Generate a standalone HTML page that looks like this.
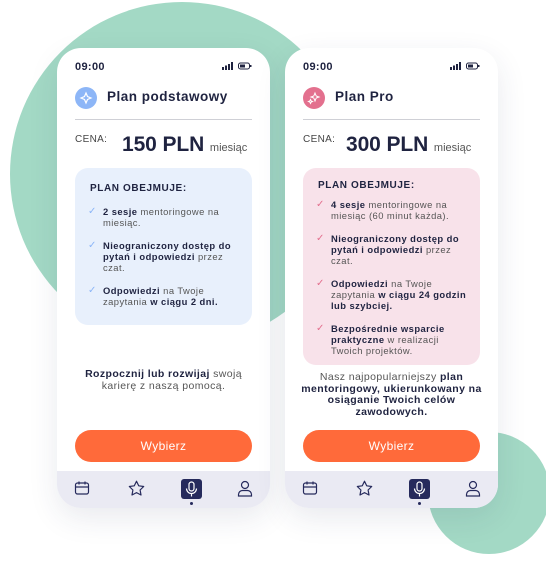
<!DOCTYPE html>
<html><head><meta charset="utf-8"><style>
*{margin:0;padding:0;box-sizing:border-box}
body{width:546px;height:569px;background:#fff;position:relative;overflow:hidden;font-family:"Liberation Sans",sans-serif;color:#1f2340;letter-spacing:.35px}
.c1{position:absolute;left:10px;top:2px;width:344px;height:344px;border-radius:50%;background:#a3d9c5}
.c2{position:absolute;left:428px;top:432px;width:122px;height:122px;border-radius:50%;background:#a3d9c5}
.ph{position:absolute;top:48px;width:213px;height:460px;background:#fff;border-radius:24px;overflow:hidden;box-shadow:0 10px 30px rgba(40,50,90,.10)}
.time{position:absolute;left:18px;top:13px;font-size:11px;font-weight:bold}
.st{position:absolute;right:18px;top:14px}
.ic{position:absolute;left:18px;top:39px;width:22px;height:22px;border-radius:50%}
.tt{position:absolute;left:50px;top:41px;font-size:13.5px;font-weight:bold;letter-spacing:.5px}
.dv{position:absolute;left:18px;right:18px;top:71px;height:1px;background:#cfd0d6}
.cena{position:absolute;left:18px;top:86px;font-size:10px;color:#444}
.pr{position:absolute;top:85px;font-size:21px;font-weight:bold;letter-spacing:-.1px}
.pr span{font-size:11px;font-weight:normal;color:#555;letter-spacing:0}
.box{position:absolute;left:18px;right:18px;top:120px;border-radius:13px;padding:15px 12px 0 13px}
.box h4{font-size:10px;font-weight:bold;margin-left:2px;letter-spacing:.6px}
.it{position:relative;padding-left:15px;font-size:9.4px;line-height:11px;color:#555;margin-top:12px;letter-spacing:.45px}
.it b{color:#1f2340}
.it i{position:absolute;left:0;top:0;font-style:normal;font-size:10px}
.txt{position:absolute;left:14px;right:14px;text-align:center;font-size:10.5px;line-height:12px;color:#555;letter-spacing:.4px}
.txt b{color:#1f2340}
.btn{position:absolute;left:18px;right:18px;top:382px;height:32px;border-radius:16px;background:#ff6a3a;color:#fff;font-size:12px;text-align:center;line-height:32px}
.nav{position:absolute;left:0;right:0;bottom:0;height:37px;background:#eaeaf3}
.nav>svg{position:absolute;top:9px}
.mic{position:absolute;left:124px;top:8px;width:21px;height:20px;border-radius:3px;background:#262a5c}
.mic svg{position:absolute;left:0;top:0}
.dot{position:absolute;left:133px;top:31px;width:3px;height:3px;border-radius:50%;background:#262a5c}
</style></head><body>
<div class="c1"></div><div class="c2"></div>

<div class="ph" style="left:57px">
<div class="time">09:00</div>
<svg class="st" width="30" height="8" viewBox="0 0 30 8"><rect x="0" y="5" width="2" height="3" fill="#1f2340"/><rect x="3" y="3.5" width="2" height="4.5" fill="#1f2340"/><rect x="6" y="2" width="2" height="6" fill="#1f2340"/><rect x="9" y="0" width="2" height="8" fill="#1f2340"/><rect x="16.5" y="1" width="11" height="6" rx="2" fill="none" stroke="#1f2340"/><rect x="18" y="2.5" width="5" height="3" fill="#1f2340"/><rect x="28" y="3" width="1.5" height="2" fill="#1f2340"/></svg>
<div class="ic" style="background:#8db6f7"><svg width="22" height="22"><path d="M11 6 L12.5 9.5 L16 11 L12.5 12.5 L11 16 L9.5 12.5 L6 11 L9.5 9.5Z" fill="none" stroke="#fff" stroke-width="1.2"/></svg></div>
<div class="tt">Plan podstawowy</div>
<div class="dv"></div>
<div class="cena">CENA:</div>
<div class="pr" style="left:65px">150 PLN <span>miesiąc</span></div>
<div class="box" style="background:#e8f0fc;height:157px">
<h4>PLAN OBEJMUJE:</h4>
<div class="it"><i style="color:#8db6f7">✓</i><b>2 sesje</b> mentoringowe na miesiąc.</div>
<div class="it"><i style="color:#8db6f7">✓</i><b>Nieograniczony dostęp do pytań i odpowiedzi</b> przez czat.</div>
<div class="it"><i style="color:#8db6f7">✓</i><b>Odpowiedzi</b> na Twoje zapytania <b>w ciągu 2 dni.</b></div>
</div>
<div class="txt" style="top:320px;left:24px;right:24px"><b>Rozpocznij lub rozwijaj</b> swoją karierę z naszą pomocą.</div>
<div class="btn">Wybierz</div>
<div class="nav">
<svg style="left:17px" width="16" height="16" viewBox="0 0 16 16" fill="none" stroke="#262a5c" stroke-width="1.2"><rect x="1.5" y="3" width="13" height="11" rx="2"/><path d="M1.5 7h13M5 1.5v3M11 1.5v3"/></svg>
<svg style="left:71px" width="17" height="16" viewBox="0 0 17 16" fill="none" stroke="#262a5c" stroke-width="1.2"><path d="M8.5 1.2l2.2 4.6 5 .7-3.6 3.5.9 5-4.5-2.4-4.5 2.4.9-5L1.3 6.5l5-.7z" stroke-linejoin="round"/></svg>
<div class="mic"><svg width="21" height="20" viewBox="0 0 21 20" fill="none" stroke="#fff" stroke-width="1.2"><rect x="8" y="3" width="5" height="9" rx="2.5"/><path d="M5.5 9.5a5 5 0 0 0 10 0M10.5 14.5v3"/></svg></div>
<div class="dot"></div>
<svg style="left:180px" width="16" height="17" viewBox="0 0 16 17" fill="none" stroke="#262a5c" stroke-width="1.2"><circle cx="8" cy="5" r="3.5"/><path d="M1.5 16v-1.5a4 4 0 0 1 4-4h5a4 4 0 0 1 4 4V16z"/></svg>
</div>
</div>

<div class="ph" style="left:285px">
<div class="time">09:00</div>
<svg class="st" width="30" height="8" viewBox="0 0 30 8"><rect x="0" y="5" width="2" height="3" fill="#1f2340"/><rect x="3" y="3.5" width="2" height="4.5" fill="#1f2340"/><rect x="6" y="2" width="2" height="6" fill="#1f2340"/><rect x="9" y="0" width="2" height="8" fill="#1f2340"/><rect x="16.5" y="1" width="11" height="6" rx="2" fill="none" stroke="#1f2340"/><rect x="18" y="2.5" width="5" height="3" fill="#1f2340"/><rect x="28" y="3" width="1.5" height="2" fill="#1f2340"/></svg>
<div class="ic" style="background:#e3708e"><svg width="22" height="22"><path d="M12 6 L13.2 9 L16 10 L13.2 11 L12 14 L10.8 11 L8 10 L10.8 9Z M7.5 12.5 L8.2 14 L9.5 14.5 L8.2 15 L7.5 16.5 L6.8 15 L5.5 14.5 L6.8 14Z" fill="none" stroke="#fff" stroke-width="1"/></svg></div>
<div class="tt">Plan Pro</div>
<div class="dv"></div>
<div class="cena">CENA:</div>
<div class="pr" style="left:61px">300 PLN <span>miesiąc</span></div>
<div class="box" style="background:#f8e2ea;height:197px;padding-top:12px">
<h4>PLAN OBEJMUJE:</h4>
<div class="it" style="margin-top:8px"><i style="color:#e3708e">✓</i><b>4 sesje</b> mentoringowe na miesiąc (60 minut każda).</div>
<div class="it"><i style="color:#e3708e">✓</i><b>Nieograniczony dostęp do pytań i odpowiedzi</b> przez czat.</div>
<div class="it"><i style="color:#e3708e">✓</i><b>Odpowiedzi</b> na Twoje zapytania <b>w ciągu 24 godzin lub szybciej.</b></div>
<div class="it"><i style="color:#e3708e">✓</i><b>Bezpośrednie wsparcie praktyczne</b> w realizacji Twoich projektów.</div>
</div>
<div class="txt" style="top:324px;left:12px;right:12px;line-height:11.5px">Nasz najpopularniejszy <b>plan mentoringowy, ukierunkowany na osiąganie Twoich celów zawodowych.</b></div>
<div class="btn">Wybierz</div>
<div class="nav">
<svg style="left:17px" width="16" height="16" viewBox="0 0 16 16" fill="none" stroke="#262a5c" stroke-width="1.2"><rect x="1.5" y="3" width="13" height="11" rx="2"/><path d="M1.5 7h13M5 1.5v3M11 1.5v3"/></svg>
<svg style="left:71px" width="17" height="16" viewBox="0 0 17 16" fill="none" stroke="#262a5c" stroke-width="1.2"><path d="M8.5 1.2l2.2 4.6 5 .7-3.6 3.5.9 5-4.5-2.4-4.5 2.4.9-5L1.3 6.5l5-.7z" stroke-linejoin="round"/></svg>
<div class="mic"><svg width="21" height="20" viewBox="0 0 21 20" fill="none" stroke="#fff" stroke-width="1.2"><rect x="8" y="3" width="5" height="9" rx="2.5"/><path d="M5.5 9.5a5 5 0 0 0 10 0M10.5 14.5v3"/></svg></div>
<div class="dot"></div>
<svg style="left:180px" width="16" height="17" viewBox="0 0 16 17" fill="none" stroke="#262a5c" stroke-width="1.2"><circle cx="8" cy="5" r="3.5"/><path d="M1.5 16v-1.5a4 4 0 0 1 4-4h5a4 4 0 0 1 4 4V16z"/></svg>
</div>
</div>
</body></html>
